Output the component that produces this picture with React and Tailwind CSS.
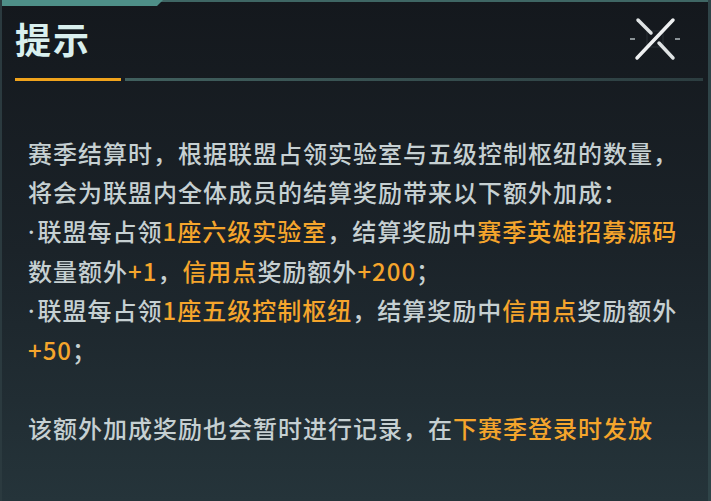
import React from "react";

// Season settlement tip dialog
const O = ({ children }) => <span className="text-[#f5a52c]">{children}</span>;
const Dot = () => <span className="font-['Noto_Sans',sans-serif] mr-[2px]">·</span>;

const CloseIcon = () => (
  <svg width="56" height="48" viewBox="0 0 56 48" fill="none">
    <rect x="20" y="16" width="16" height="16" stroke="#2a3036" strokeWidth="1" />
    <line x1="3" y1="24" x2="8" y2="24" stroke="#8a9296" strokeWidth="2" />
    <line x1="48" y1="24" x2="53" y2="24" stroke="#8a9296" strokeWidth="2" />
    <line x1="11" y1="5" x2="24" y2="18" stroke="#dfe3e4" strokeWidth="3.5" strokeLinecap="round" />
    <line x1="32" y1="28" x2="46" y2="43" stroke="#dfe3e4" strokeWidth="3.5" strokeLinecap="round" />
    <line x1="46" y1="5" x2="10" y2="43" stroke="#eef0f1" strokeWidth="3.5" strokeLinecap="round" />
  </svg>
);

export default function App() {
  return (
    <div className="relative w-[711px] h-[501px] overflow-hidden bg-gradient-to-b from-[#14181d] via-[#1b2329] to-[#25343a] font-['Noto_Sans_CJK_SC','Noto_Sans',sans-serif]">
      {/* frame edges */}
      <div className="absolute top-0 left-0 right-0 h-[2px] bg-[#3f6664]" />
      <div className="absolute top-0 left-0 w-[163px] h-[6px] bg-[#4e8f88] [clip-path:polygon(0_0,100%_0,calc(100%-6px)_100%,0_100%)]" />
      <div className="absolute top-0 left-0 bottom-0 w-[2px] bg-[#2b3a3f]" />
      <div className="absolute top-0 right-0 bottom-0 w-[3px] bg-[#2f4448]" />

      {/* header */}
      <div className="flex items-start justify-between pl-[15px] pr-[28px] pt-[16px]">
        <div className="text-[36px] leading-[44px] font-bold text-[#d9efee] tracking-[2px]">
          提示
        </div>
        <div className="-mt-[1px]">
          <CloseIcon />
        </div>
      </div>

      <div className="flex items-center mt-[15px] pl-[15px] pr-[8px] gap-[4px]">
        <div className="w-[106px] h-[3px] bg-[#f0a31c]" />
        <div className="flex-1 h-[3px] bg-gradient-to-r from-[#41605e] to-[#2c3d40]" />
      </div>

      {/* body */}
      <div className="pl-[28px] pt-[52px] text-[24px] leading-[39px] tracking-[1px] font-medium text-[#c6d0d2] whitespace-nowrap">
        <div>赛季结算时，根据联盟占领实验室与五级控制枢纽的数量，</div>
        <div>将会为联盟内全体成员的结算奖励带来以下额外加成：</div>
        <div>
          <Dot />联盟每占领<O>1座六级实验室</O>，结算奖励中<O>赛季英雄招募源码</O>
        </div>
        <div>
          数量额外<O>+1</O>，<O>信用点</O>奖励额外<O>+200</O>；
        </div>
        <div>
          <Dot />联盟每占领<O>1座五级控制枢纽</O>，结算奖励中<O>信用点</O>奖励额外
        </div>
        <div>
          <O>+50</O>；
        </div>
        <div className="h-[39px]" />
        <div>
          该额外加成奖励也会暂时进行记录，在<O>下赛季登录时发放</O>
        </div>
      </div>
    </div>
  );
}
